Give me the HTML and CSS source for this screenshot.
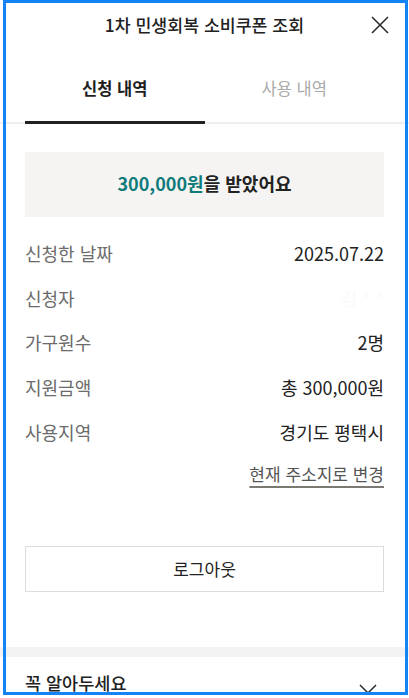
FILE: index.html
```html
<!DOCTYPE html>
<html lang="ko">
<head>
    <meta charset="UTF-8">
    <meta name="viewport" content="width=device-width, initial-scale=1.0">
    <title>1차 민생회복 소비쿠폰 조회</title>
    <link rel="stylesheet" href="styles.css">
</head>
<body>
    <div class="frame"></div>

    <header class="header">
        <h1>1차 민생회복 소비쿠폰 조회</h1>
        <button class="btn-close" aria-label="닫기">
            <svg width="18" height="18" viewBox="0 0 18 18">
                <path d="M1 1 L17 17 M17 1 L1 17" stroke="#2b2b2b" stroke-width="1.6" fill="none"/>
            </svg>
        </button>
    </header>

    <nav class="tabs">
        <div class="tab active">신청 내역</div>
        <div class="tab">사용 내역</div>
    </nav>

    <main class="content">
        <div class="summary">
            <span class="amount">300,000원</span>을 받았어요
        </div>

        <dl class="info">
            <div class="row">
                <dt>신청한 날짜</dt>
                <dd>2025.07.22</dd>
            </div>
            <div class="row">
                <dt>신청자</dt>
                <dd class="masked">김 * *</dd>
            </div>
            <div class="row">
                <dt>가구원수</dt>
                <dd>2명</dd>
            </div>
            <div class="row">
                <dt>지원금액</dt>
                <dd>총 300,000원</dd>
            </div>
            <div class="row">
                <dt>사용지역</dt>
                <dd>경기도 평택시</dd>
            </div>
        </dl>

        <div class="link-wrap">
            <a href="#" class="link-change">현재 주소지로 변경</a>
        </div>

        <button class="btn-logout">로그아웃</button>
    </main>

    <div class="divider"></div>

    <section class="notice">
        <h2>꼭 알아두세요</h2>
        <svg class="chevron" width="18" height="10" viewBox="0 0 18 10">
            <path d="M1 1 L9 9 L17 1" stroke="#2b2b2b" stroke-width="1.5" fill="none"/>
        </svg>
    </section>
</body>
</html>
```

FILE: styles.css
```css
body {
    margin: 0;
    font-family: 'Noto Sans CJK KR', 'Noto Sans', sans-serif;
    color: #222;
    background-color: #fff;
    overflow: hidden;
}

.frame {
    position: fixed;
    left: 3px;
    top: 0;
    width: 405px;
    height: 695px;
    box-sizing: border-box;
    border: 3px solid #1383f6;
    pointer-events: none;
    z-index: 10;
}

.header {
    height: 50px;
    display: flex;
    justify-content: center;
    align-items: center;
    position: relative;
}

.header h1 {
    margin: 0;
    font-size: 17.3px;
    font-weight: 500;
    line-height: 24px;
}

.btn-close {
    position: absolute;
    right: 20px;
    top: 16px;
    padding: 0;
    border: none;
    background: none;
    width: 18px;
    height: 18px;
}

.btn-close svg {
    display: block;
}

.tabs {
    display: flex;
    padding: 0 25px;
    box-shadow: inset 0 -2px 0 #efefef;
}

.tab {
    flex: 1;
    text-align: center;
    font-size: 16.5px;
    line-height: 24px;
    padding: 26px 0 21px;
    color: #aaa;
    border-bottom: 3px solid transparent;
}

.tab.active {
    color: #1e1e1e;
    font-weight: 700;
    border-bottom-color: #222;
}

.content {
    padding: 28px 25px 55px;
}

.summary {
    background-color: #f5f4f2;
    height: 65px;
    padding-bottom: 3px;
    box-sizing: border-box;
    display: flex;
    justify-content: center;
    align-items: center;
    font-size: 18px;
    font-weight: 700;
    color: #222;
}

.amount {
    color: #0f7b7b;
}

.info {
    margin: 14px 0 0;
}

.row {
    display: flex;
    justify-content: space-between;
    align-items: center;
    padding: 10.3px 0;
    font-size: 18px;
    line-height: 24px;
}

.row dt {
    color: #6b6b6b;
}

.row dd {
    margin: 0;
    color: #222;
}

.row dd.masked {
    color: #fafafa;
}

.link-wrap {
    text-align: right;
    margin-top: 8px;
}

.link-change {
    font-size: 17px;
    line-height: 24px;
    color: #555;
    text-decoration: underline;
    text-decoration-color: #7b7a72;
    text-underline-offset: 5px;
    text-decoration-thickness: 1.5px;
}

.btn-logout {
    display: block;
    width: 100%;
    height: 46px;
    margin-top: 60px;
    background: #fff;
    border: 1px solid #dddcd8;
    font-family: inherit;
    font-size: 17px;
    color: #222;
    cursor: pointer;
}

.divider {
    height: 10px;
    background-color: #f3f3f3;
}

.notice {
    display: flex;
    justify-content: space-between;
    align-items: center;
    padding: 14px 32px 0 25px;
}

.notice h2 {
    margin: 0;
    font-size: 17.5px;
    font-weight: 500;
    line-height: 24px;
}

.chevron {
    margin-top: 12px;
}
```
